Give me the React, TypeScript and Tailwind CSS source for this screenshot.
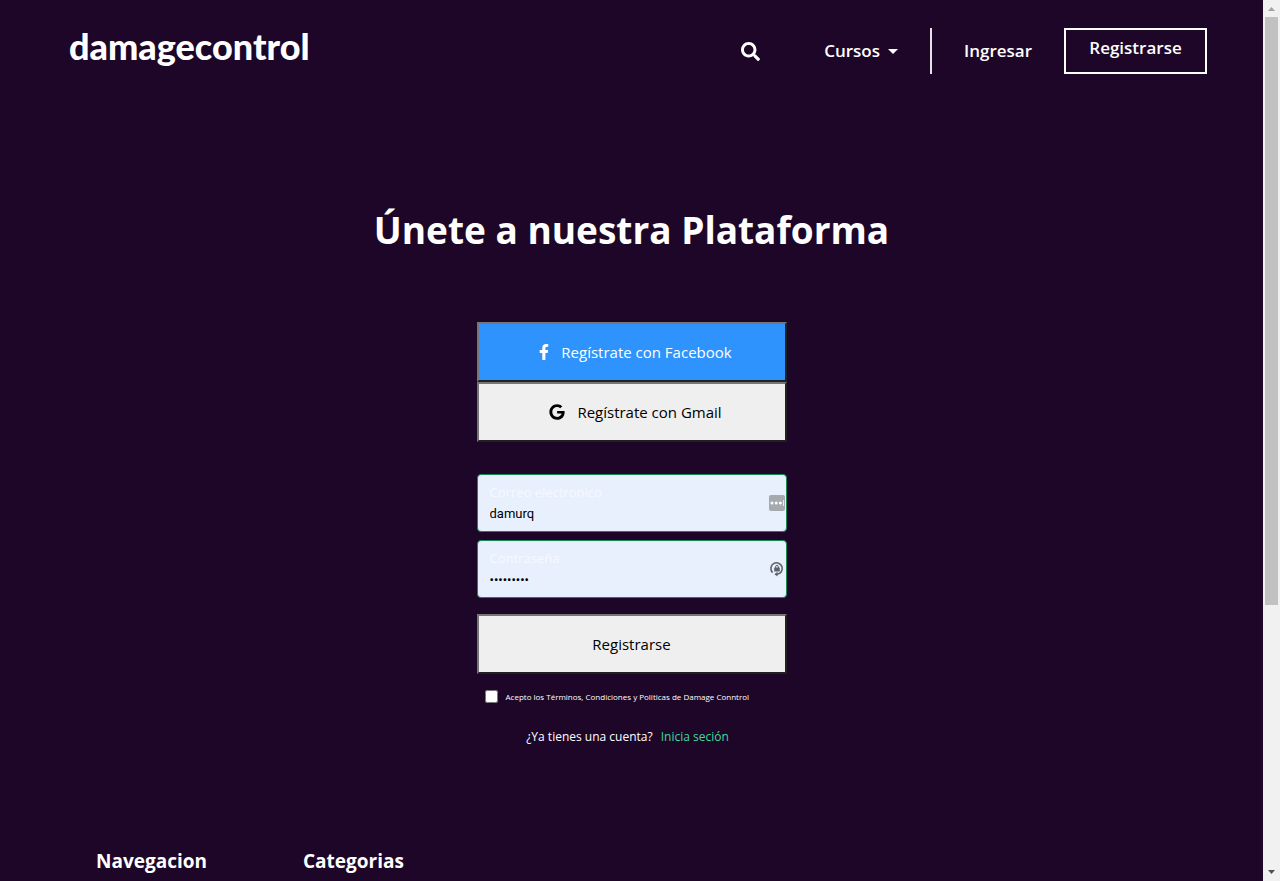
import { FaFacebookF, FaGoogle, FaSearch } from "react-icons/fa";

const outset =
  "flex h-[60px] w-full items-center justify-center border-2 border-t-[#767676] border-r-[#212121] border-b-[#212121] border-l-[#767676]";

function Header() {
  return (
    <header className="flex items-start justify-between pt-7 pr-14 pl-[69px]">
      <a href="#inicio" className="font-['Lato',sans-serif] text-[36px] leading-9 font-black">
        damagecontrol
      </a>
      <nav className="flex items-center text-[17px] font-semibold">
        <button type="button" aria-label="Buscar" className="mr-16">
          <FaSearch className="size-[19px]" />
        </button>
        <button type="button" className="mr-8 flex items-center gap-2">
          Cursos
          <svg viewBox="0 0 10 5" className="h-[5px] w-2.5" aria-hidden="true">
            <path d="M0 0h10L5 5z" fill="currentColor" />
          </svg>
        </button>
        <div className="h-[46px] w-0.5 bg-[#e5e2e7]" />
        <a href="#ingresar" className="mx-8">
          Ingresar
        </a>
        <a
          href="#registro"
          className="flex h-[46px] w-[143px] justify-center border-2 border-white pt-1.5 leading-6"
        >
          Registrarse
        </a>
      </nav>
    </header>
  );
}

function PasswordManagerIcon() {
  return (
    <svg viewBox="0 0 16 16" className="size-4 shrink-0" aria-hidden="true">
      <rect width="16" height="16" rx="2" fill="#a6a9ad" />
      <circle cx="3" cy="8" r="1.5" fill="#fff" />
      <circle cx="7.2" cy="8" r="1.5" fill="#fff" />
      <circle cx="11.4" cy="8" r="1.5" fill="#fff" />
      <path d="M14.5 5v6" stroke="#fff" strokeWidth="0.8" />
    </svg>
  );
}

function GeneratePasswordIcon() {
  return (
    <svg viewBox="0 0 16 16" className="size-4 shrink-0" aria-hidden="true">
      <path
        d="M3.6 11.6A5.7 5.7 0 1 1 8 13.2"
        fill="none"
        stroke="#5f6368"
        strokeWidth="1.6"
      />
      <path d="M8.5 10.8v4.8L5.4 13.2z" fill="#5f6368" />
      <rect x="5.2" y="6.6" width="5.6" height="4" rx="0.5" fill="#5f6368" />
      <path d="M6.6 7V5.8a1.4 1.4 0 0 1 2.800 0V7" fill="none" stroke="#5f6368" />
    </svg>
  );
}

type FieldProps = {
  id: string;
  label: string;
  type: string;
  value: string;
  icon: React.ReactNode;
};

function Field({ id, label, type, value, icon }: FieldProps) {
  return (
    <div className="flex h-[58px] items-center rounded border border-[#198754] bg-[#e8f0fe] pr-px pl-3">
      <div className="flex min-w-0 flex-1 flex-col gap-px pt-[3px]">
        <label htmlFor={id} className="text-[13px] leading-[18px] text-[#f6f9ff]">
          {label}
        </label>
        <input
          id={id}
          type={type}
          defaultValue={value}
          className="w-full bg-transparent font-['Roboto',sans-serif] text-[13px] leading-6 text-black outline-none"
        />
      </div>
      {icon}
    </div>
  );
}

function SignUpForm() {
  return (
    <form className="mx-auto w-[310px]">
      <button type="button" className={`${outset} gap-3 bg-[#2e93fc] pl-2 text-[15px]`}>
        <FaFacebookF className="h-4 w-2.5" />
        Regístrate con Facebook
      </button>
      <button
        type="button"
        className={`${outset} gap-3 bg-[#efefef] pl-2 text-[15px] text-black`}
      >
        <FaGoogle className="size-4" />
        Regístrate con Gmail
      </button>
      <div className="mt-8 mb-4 flex flex-col gap-2">
        <Field
          id="correo"
          label="Correo electronico"
          type="text"
          value="damurq"
          icon={<PasswordManagerIcon />}
        />
        <Field
          id="clave"
          label="Contraseña"
          type="password"
          value="damurq123"
          icon={<GeneratePasswordIcon />}
        />
      </div>
      <button type="button" className={`${outset} bg-[#efefef] text-[15px] text-black`}>
        Registrarse
      </button>
      <div className="mt-4 flex items-center gap-2 pl-2">
        <input id="terminos" type="checkbox" className="size-[13px]" />
        <label htmlFor="terminos" className="text-[8px] leading-3">
          Acepto los Términos, Condiciones y Politicas de Damage Conntrol
        </label>
      </div>
      <p className="mt-6 flex justify-center gap-2 pr-2 text-xs leading-5">
        ¿Ya tienes una cuenta?
        <a href="#ingresar" className="text-[#3fd99b]">
          Inicia seción
        </a>
      </p>
    </form>
  );
}

function ScrollBar() {
  return (
    <div className="flex w-[17px] shrink-0 flex-col items-center bg-[#f1f1f1]" aria-hidden="true">
      <svg viewBox="0 0 17 17" className="size-[17px] shrink-0">
        <path d="M5 11h7L8.5 7z" fill="#a3a3a3" />
      </svg>
      <div className="w-[13px] grow-[588] bg-[#c1c1c1]" />
      <div className="grow-[259]" />
      <svg viewBox="0 0 17 17" className="size-[17px] shrink-0">
        <path d="M5 6h7L8.5 10z" fill="#505050" />
      </svg>
    </div>
  );
}

export default function App() {
  return (
    <div className="flex h-screen bg-[#1e0628] font-['Open_Sans','Noto_Sans',sans-serif] text-white">
      <div className="min-w-0 flex-1 overflow-hidden">
        <Header />
        <main>
          <h1 className="mt-32 mb-16 text-center text-[37px] leading-[56px] font-bold">
            Únete a nuestra Plataforma
          </h1>
          <SignUpForm />
        </main>
        <footer className="mt-[100px] flex gap-24 px-24 text-[19px] leading-7 font-bold">
          <h2>Navegacion</h2>
          <h2>Categorias</h2>
        </footer>
      </div>
      <ScrollBar />
    </div>
  );
}
